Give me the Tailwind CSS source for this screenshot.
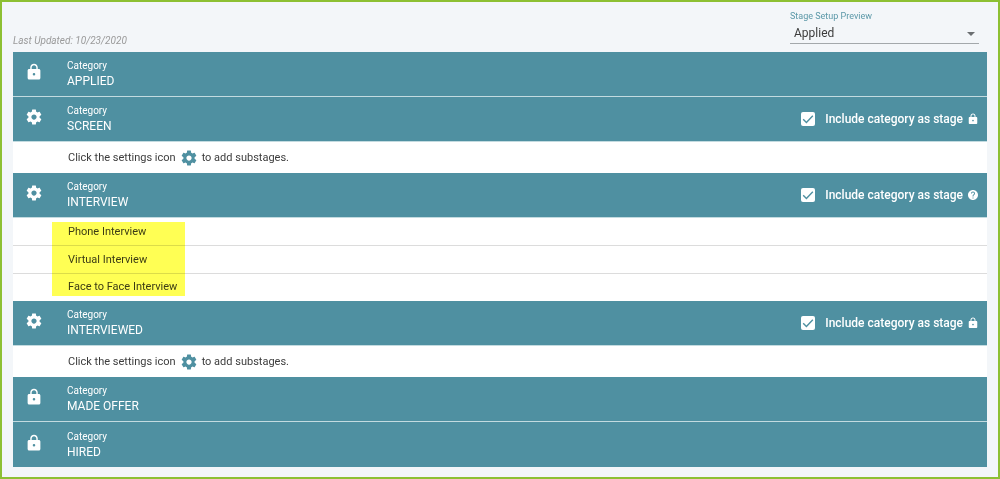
<!DOCTYPE html>
<html lang="en">
<head>
  <meta charset="UTF-8">
  <meta name="viewport" content="width=device-width, initial-scale=1.0">
  <title>Stage Setup</title>
  <script src="https://cdn.jsdelivr.net/npm/@tailwindcss/browser@4"></script>
</head>
<body class="min-h-screen border-2 border-[#8dc033] bg-[#f3f6f9] px-[11px] pb-2 font-['Roboto',sans-serif] text-[#3c3c3c]">
  <!-- Shared icons -->
  <svg class="hidden">
    <symbol id="lock" viewBox="0 0 24 24">
      <path fill="currentColor" d="M18.5 8H17V6c0-2.76-2.24-5-5-5S7 3.24 7 6v2H5.5c-1.1 0-2 .9-2 2v10c0 1.1.9 2 2 2h13c1.1 0 2-.9 2-2V10c0-1.1-.9-2-2-2zM12 16.7a1.7 1.7 0 1 1 0-3.4 1.7 1.7 0 0 1 0 3.4zm3.1-8.7H8.9V6c0-1.71 1.39-3.1 3.1-3.1s3.1 1.39 3.1 3.1v2z"/>
    </symbol>
    <symbol id="gear" viewBox="0 0 24 24">
      <path fill="currentColor" d="M19.43 12.98c.04-.32.07-.64.07-.98s-.03-.66-.07-.98l2.11-1.65c.19-.15.24-.42.12-.64l-2-3.46c-.12-.22-.39-.3-.61-.22l-2.49 1c-.52-.4-1.08-.73-1.69-.98l-.38-2.65C14.46 2.18 14.25 2 14 2h-4c-.25 0-.46.18-.49.42l-.38 2.65c-.61.25-1.17.59-1.69.98l-2.49-1c-.23-.09-.49 0-.61.22l-2 3.46c-.13.22-.07.49.12.64l2.11 1.65c-.04.32-.07.65-.07.98s.03.66.07.98l-2.11 1.65c-.19.15-.24.42-.12.64l2 3.46c.12.22.39.3.61.22l2.49-1c.52.4 1.08.73 1.69.98l.38 2.65c.03.24.24.42.49.42h4c.25 0 .46-.18.49-.42l.38-2.65c.61-.25 1.17-.59 1.69-.98l2.49 1c.23.09.49 0 .61-.22l2-3.46c.12-.22.07-.49-.12-.64l-2.11-1.65zM12 15.5c-1.93 0-3.5-1.57-3.5-3.5s1.57-3.5 3.5-3.5 3.5 1.57 3.5 3.5-1.57 3.5-3.5 3.5z"/>
    </symbol>
    <symbol id="help" viewBox="0 0 24 24">
      <path fill="currentColor" d="M12 2C6.48 2 2 6.48 2 12s4.48 10 10 10 10-4.48 10-10S17.52 2 12 2zm1 17h-2v-2h2v2zm2.07-7.75l-.9.92C13.45 12.9 13 13.5 13 15h-2v-.5c0-1.1.45-2.1 1.17-2.83l1.24-1.26c.37-.36.59-.86.59-1.41 0-1.1-.9-2-2-2s-2 .9-2 2H8c0-2.21 1.79-4 4-4s4 1.79 4 4c0 .88-.36 1.68-.93 2.25z"/>
    </symbol>
    <symbol id="check" viewBox="0 0 16 16">
      <path fill="none" stroke="currentColor" stroke-width="1.6" d="M2.5 8.2l3.7 3.7 7.3-7.6"/>
    </symbol>
  </svg>

  <header class="flex h-[50px] items-end justify-between pr-2">
    <p class="pb-1 text-[10px] leading-3.5 text-[#9a9a9a] italic">Last Updated: 10/23/2020</p>
    <div class="w-[189px] pb-2">
      <label for="stage-preview" class="block text-[9px] leading-3 text-[#5b98a8]">Stage Setup Preview</label>
      <div class="relative">
        <select id="stage-preview" class="block h-5.5 w-full appearance-none border-b border-[#a3a8ab] bg-transparent px-1 text-[12px]">
          <option selected>Applied</option>
          <option>Screen</option>
          <option>Interview</option>
          <option>Interviewed</option>
          <option>Made Offer</option>
          <option>Hired</option>
        </select>
        <svg class="pointer-events-none absolute top-2.5 right-1 h-1 w-2 text-[#6b6f72]" viewBox="0 0 8 4"><path fill="currentColor" d="M0 0h8L4 4z"/></svg>
      </div>
    </div>
  </header>

  <main>
    <section class="flex h-[45px] items-center border-b border-[#c3dbe0] bg-[#4f90a1] pr-2 text-white">
      <svg class="mr-6 mb-1 ml-3 size-[18px]" role="img" aria-label="Locked"><use href="#lock"/></svg>
      <div class="flex-1">
        <p class="text-[10px] leading-3.5">Category</p>
        <h2 class="text-[12px] leading-4">APPLIED</h2>
      </div>
    </section>

    <section>
      <div class="flex h-[45px] items-center border-b border-[#c3dbe0] bg-[#4f90a1] pr-2 text-white">
        <button type="button" class="mr-6 mb-1 ml-3" aria-label="Screen settings"><svg class="size-[18px]"><use href="#gear"/></svg></button>
        <div class="flex-1">
          <p class="text-[10px] leading-3.5">Category</p>
          <h2 class="text-[12px] leading-4">SCREEN</h2>
        </div>
        <label class="flex items-center text-[12px] leading-4 font-medium">
          <span class="relative mr-2.5 size-3.5">
            <input type="checkbox" checked class="peer block size-3.5 appearance-none rounded-xs bg-white">
            <svg class="pointer-events-none absolute inset-0 hidden size-3.5 text-[#4f90a1] peer-checked:block"><use href="#check"/></svg>
          </span>
          Include category as stage
        </label>
        <svg class="ml-1 size-3" role="img" aria-label="Locked"><use href="#lock"/></svg>
      </div>
      <p class="flex h-[31px] items-center bg-white pt-0.5 pl-[55px] text-[11px]">
        Click the settings icon
        <svg class="mx-1 mb-0.5 size-[18px] text-[#4f90a1]"><use href="#gear"/></svg>
        to add substages.
      </p>
    </section>

    <section>
      <div class="flex h-[45px] items-center border-b border-[#c3dbe0] bg-[#4f90a1] pr-2 text-white">
        <button type="button" class="mr-6 mb-1 ml-3" aria-label="Interview settings"><svg class="size-[18px]"><use href="#gear"/></svg></button>
        <div class="flex-1">
          <p class="text-[10px] leading-3.5">Category</p>
          <h2 class="text-[12px] leading-4">INTERVIEW</h2>
        </div>
        <label class="flex items-center text-[12px] leading-4 font-medium">
          <span class="relative mr-2.5 size-3.5">
            <input type="checkbox" checked class="peer block size-3.5 appearance-none rounded-xs bg-white">
            <svg class="pointer-events-none absolute inset-0 hidden size-3.5 text-[#4f90a1] peer-checked:block"><use href="#check"/></svg>
          </span>
          Include category as stage
        </label>
        <svg class="ml-1 size-3" role="img" aria-label="Help"><use href="#help"/></svg>
      </div>
      <div class="relative bg-white text-[11px]">
        <ul>
          <li class="flex h-7 items-center border-b border-[#dcdcdc] pt-0.5 pl-[55px]">Phone Interview</li>
          <li class="flex h-7 items-center border-b border-[#dcdcdc] pt-0.5 pl-[55px]">Virtual Interview</li>
          <li class="flex h-[27px] items-center pl-[55px]">Face to Face Interview</li>
        </ul>
        <!-- Highlighter over the substages -->
        <div class="pointer-events-none absolute top-1 bottom-[5px] left-[39px] w-[133px] bg-[#ffff54] mix-blend-multiply"></div>
      </div>
    </section>

    <section>
      <div class="flex h-[45px] items-center border-b border-[#c3dbe0] bg-[#4f90a1] pr-2 text-white">
        <button type="button" class="mr-6 mb-1 ml-3" aria-label="Interviewed settings"><svg class="size-[18px]"><use href="#gear"/></svg></button>
        <div class="flex-1">
          <p class="text-[10px] leading-3.5">Category</p>
          <h2 class="text-[12px] leading-4">INTERVIEWED</h2>
        </div>
        <label class="flex items-center text-[12px] leading-4 font-medium">
          <span class="relative mr-2.5 size-3.5">
            <input type="checkbox" checked class="peer block size-3.5 appearance-none rounded-xs bg-white">
            <svg class="pointer-events-none absolute inset-0 hidden size-3.5 text-[#4f90a1] peer-checked:block"><use href="#check"/></svg>
          </span>
          Include category as stage
        </label>
        <svg class="ml-1 size-3" role="img" aria-label="Locked"><use href="#lock"/></svg>
      </div>
      <p class="flex h-[31px] items-center bg-white pt-0.5 pl-[55px] text-[11px]">
        Click the settings icon
        <svg class="mx-1 mb-0.5 size-[18px] text-[#4f90a1]"><use href="#gear"/></svg>
        to add substages.
      </p>
    </section>

    <section class="flex h-[45px] items-center border-b border-[#c3dbe0] bg-[#4f90a1] pr-2 text-white">
      <svg class="mr-6 mb-1 ml-3 size-[18px]" role="img" aria-label="Locked"><use href="#lock"/></svg>
      <div class="flex-1">
        <p class="text-[10px] leading-3.5">Category</p>
        <h2 class="text-[12px] leading-4">MADE OFFER</h2>
      </div>
    </section>

    <section class="flex h-[45px] items-center bg-[#4f90a1] pr-2 text-white">
      <svg class="mr-6 mb-1 ml-3 size-[18px]" role="img" aria-label="Locked"><use href="#lock"/></svg>
      <div class="flex-1">
        <p class="text-[10px] leading-3.5">Category</p>
        <h2 class="text-[12px] leading-4">HIRED</h2>
      </div>
    </section>
  </main>
</body>
</html>
